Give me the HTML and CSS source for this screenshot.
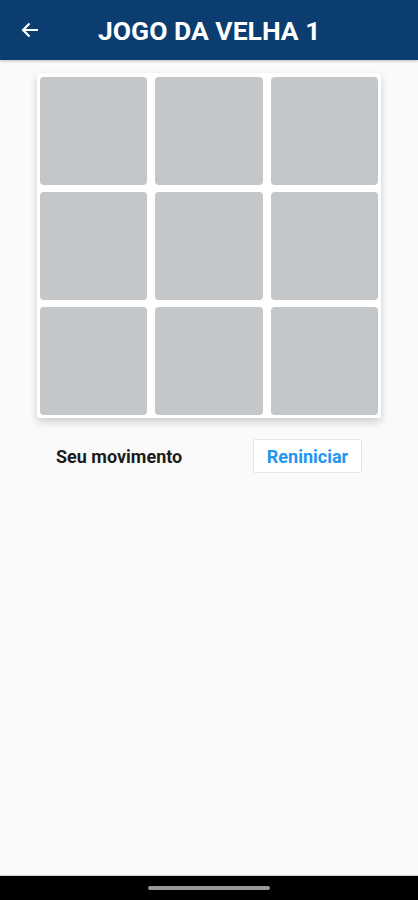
FILE: index.html
```html
<!DOCTYPE html>
<html>
<head>
<meta name="viewport" content="width=device-width, initial-scale=1">
<title>Jogo da Velha 1</title>
<link rel="stylesheet" href="styles.css">
</head>
<body>
<div class="screen">
  <header class="AppBar">
    <span class="BackIcon">
      <svg width="18" height="16" viewBox="0 0 18 16"><path d="M17 8H2M8.5 1.5L2 8l6.5 6.5" fill="none" stroke="#ffffff" stroke-width="2.2"/></svg>
    </span>
    <h1 class="Title">JOGO DA VELHA 1</h1>
  </header>

  <main class="content">
    <div class="Board">
      <div class="Cell"></div>
      <div class="Cell"></div>
      <div class="Cell"></div>
      <div class="Cell"></div>
      <div class="Cell"></div>
      <div class="Cell"></div>
      <div class="Cell"></div>
      <div class="Cell"></div>
      <div class="Cell"></div>
    </div>

    <div class="Status">
      <p class="StatusText">Seu movimento</p>
      <button class="ResetButton">Reniniciar</button>
    </div>
  </main>

  <div class="NavBar"><span class="NavPill"></span></div>
</div>
</body>
</html>
```

FILE: styles.css
```css
body {margin:0;background-color:#fafafa;font-family:Roboto, "Liberation Sans", sans-serif;}

.screen {
  height: 900px;
  display: flex;
  flex-direction: column;
}

.AppBar {
  height: 60px;
  background-color: #0b3d70;
  display: flex;
  align-items: center;
  padding-left: 21px;
  box-shadow: 0 1px 3px rgba(0,0,0,0.25);
}

.BackIcon {
  width: 18px;
  height: 16px;
  display: flex;
}

.Title {
  margin: 0 0 0 59px;
  font-size: 26.5px;
  font-weight: bold;
  color: #ffffff;
}

.content {
  flex: 1;
  padding-top: 13px;
}

.Board {
  width: 338px;
  margin-left: 37px;
  padding: 4px 3px 3px 3px;
  background-color: #ffffff;
  border-radius: 3px;
  box-shadow: 0 4px 8px rgba(0,0,0,0.18);
  display: grid;
  grid-template-columns: repeat(3, 1fr);
  gap: 7px 8px;
}

.Cell {
  height: 108px;
  background-color: #c3c7ca;
  border-radius: 4px;
}

.Status {
  display: flex;
  align-items: center;
  justify-content: space-between;
  margin-top: 21px;
  padding-left: 56px;
  padding-right: 56px;
}

.StatusText {
  margin: 0;
  font-size: 18px;
  font-weight: bold;
  color: #1c1c1c;
}

.ResetButton {
  width: 109px;
  height: 34px;
  background-color: #ffffff;
  border: 1px solid #e6e6e6;
  border-radius: 2px;
  font-family: Roboto, "Liberation Sans", sans-serif;
  font-size: 18px;
  font-weight: bold;
  color: #2196f3;
}

.NavBar {
  height: 24px;
  background-color: #000000;
  display: flex;
  justify-content: center;
  align-items: center;
  border-top: 1px solid #d0d0d0;
}

.NavPill {
  width: 122px;
  height: 4px;
  border-radius: 2px;
  background-color: #9a9a9a;
}
```
